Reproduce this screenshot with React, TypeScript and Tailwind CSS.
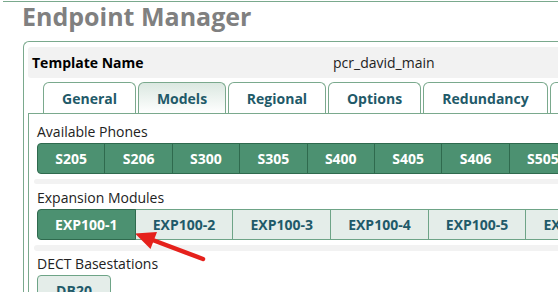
import React from 'react'

const tabs = [
  { label: 'General', w: 'w-[93px]' },
  { label: 'Models', w: 'w-[88px]' },
  { label: 'Regional', w: 'w-[98px]' },
  { label: 'Options', w: 'w-[93px]' },
  { label: 'Redundancy', w: 'w-[125px]' },
  { label: 'Provisioning', w: 'w-[120px]' },
]
const phones = ['S205', 'S206', 'S300', 'S305', 'S400', 'S405', 'S406', 'S505', 'S700']
const modules = ['EXP100-1', 'EXP100-2', 'EXP100-3', 'EXP100-4', 'EXP100-5', 'EXP100-6']

export default function App() {
  return (
    <div className="relative h-[292px] w-[558px] overflow-hidden bg-white font-['Open_Sans',sans-serif]">
      <div className="ml-[3px] mt-[1px] h-px bg-[#7aa98d]" />
      <h1 className="h-[39px] pl-[22px] text-[25px] font-bold leading-[28px] text-[#808080]">Endpoint Manager</h1>

      <div className="ml-[23px] rounded-tl-[6px] border-l border-t border-[#7aa98d] pl-[4px] pt-[5px]">
        <div className="flex h-[31px] items-center rounded-l-[3px] bg-[#f2f2f2] pl-[4px] text-[14px]">
          <span className="w-[301px] shrink-0 font-bold text-black">Template Name</span>
          <span className="text-[#222]">pcr_david_main</span>
        </div>

        <div className="mt-[4px] flex gap-[2px] pl-[15px]">
          {tabs.map((t) => (
            <div
              key={t.label}
              className={
                'flex h-[31px] shrink-0 items-center justify-center whitespace-nowrap rounded-t-[6px] border border-b-0 border-[#7aa98d] text-[14px] font-bold text-[#1f5a69] ' +
                t.w +
                (t.label === 'Models' ? ' bg-gradient-to-b from-[#dbe8e1] to-white' : ' bg-white')
              }
            >
              {t.label}
            </div>
          ))}
        </div>

        <div className="border-l border-t border-[#7aa98d] pl-[8px] pt-[8px]">
          <p className="mb-[2px] text-[14px] leading-[19px] text-[#222]">Available Phones</p>
          <div className="flex">
            {phones.map((p, i) => (
              <div
                key={p}
                className={
                  'flex h-[31px] w-[68.4px] shrink-0 items-center justify-center border border-[#2f6a4e] bg-[#4c9171] text-[14px] font-bold text-white ' +
                  (i === 0 ? 'rounded-l-[4px]' : '-ml-px')
                }
              >
                {p}
              </div>
            ))}
          </div>
          <div className="-ml-[3px] mt-[5px] h-[5px] rounded-l-[3px] bg-[#f2f2f2]" />

          <p className="mb-[2px] mt-[4px] text-[14px] leading-[19px] text-[#222]">Expansion Modules</p>
          <div className="flex">
            {modules.map((m, i) => (
              <div
                key={m}
                className={
                  'flex h-[31px] w-[98.7px] shrink-0 items-center justify-center border text-[14px] font-bold ' +
                  (i === 0
                    ? 'z-10 rounded-l-[4px] border-[#2f6a4e] bg-[#4c9171] text-white'
                    : '-ml-px border-[#6ea487] bg-[#e4ede9] text-[#1f5a69]')
                }
              >
                {m}
              </div>
            ))}
          </div>
          <div className="-ml-[3px] mt-[5px] h-[6px] rounded-l-[3px] bg-[#f2f2f2]" />

          <p className="mb-[2px] mt-[3px] text-[14px] leading-[19px] text-[#222]">DECT Basestations</p>
          <div className="flex h-[31px] w-[74px] items-center justify-center rounded-t-[4px] border border-[#6ea487] bg-[#e4ede9] text-[14px] font-bold text-[#1f5a69]">
            DB20
          </div>
        </div>
      </div>

      <svg className="absolute left-0 top-0" width="558" height="292" viewBox="0 0 558 292">
        <line x1="203" y1="259" x2="150" y2="239" stroke="#e5211c" strokeWidth="4.5" strokeLinecap="round" />
        <polygon points="135,233.5 157,232 150.5,249" fill="#e5211c" />
      </svg>
    </div>
  )
}
